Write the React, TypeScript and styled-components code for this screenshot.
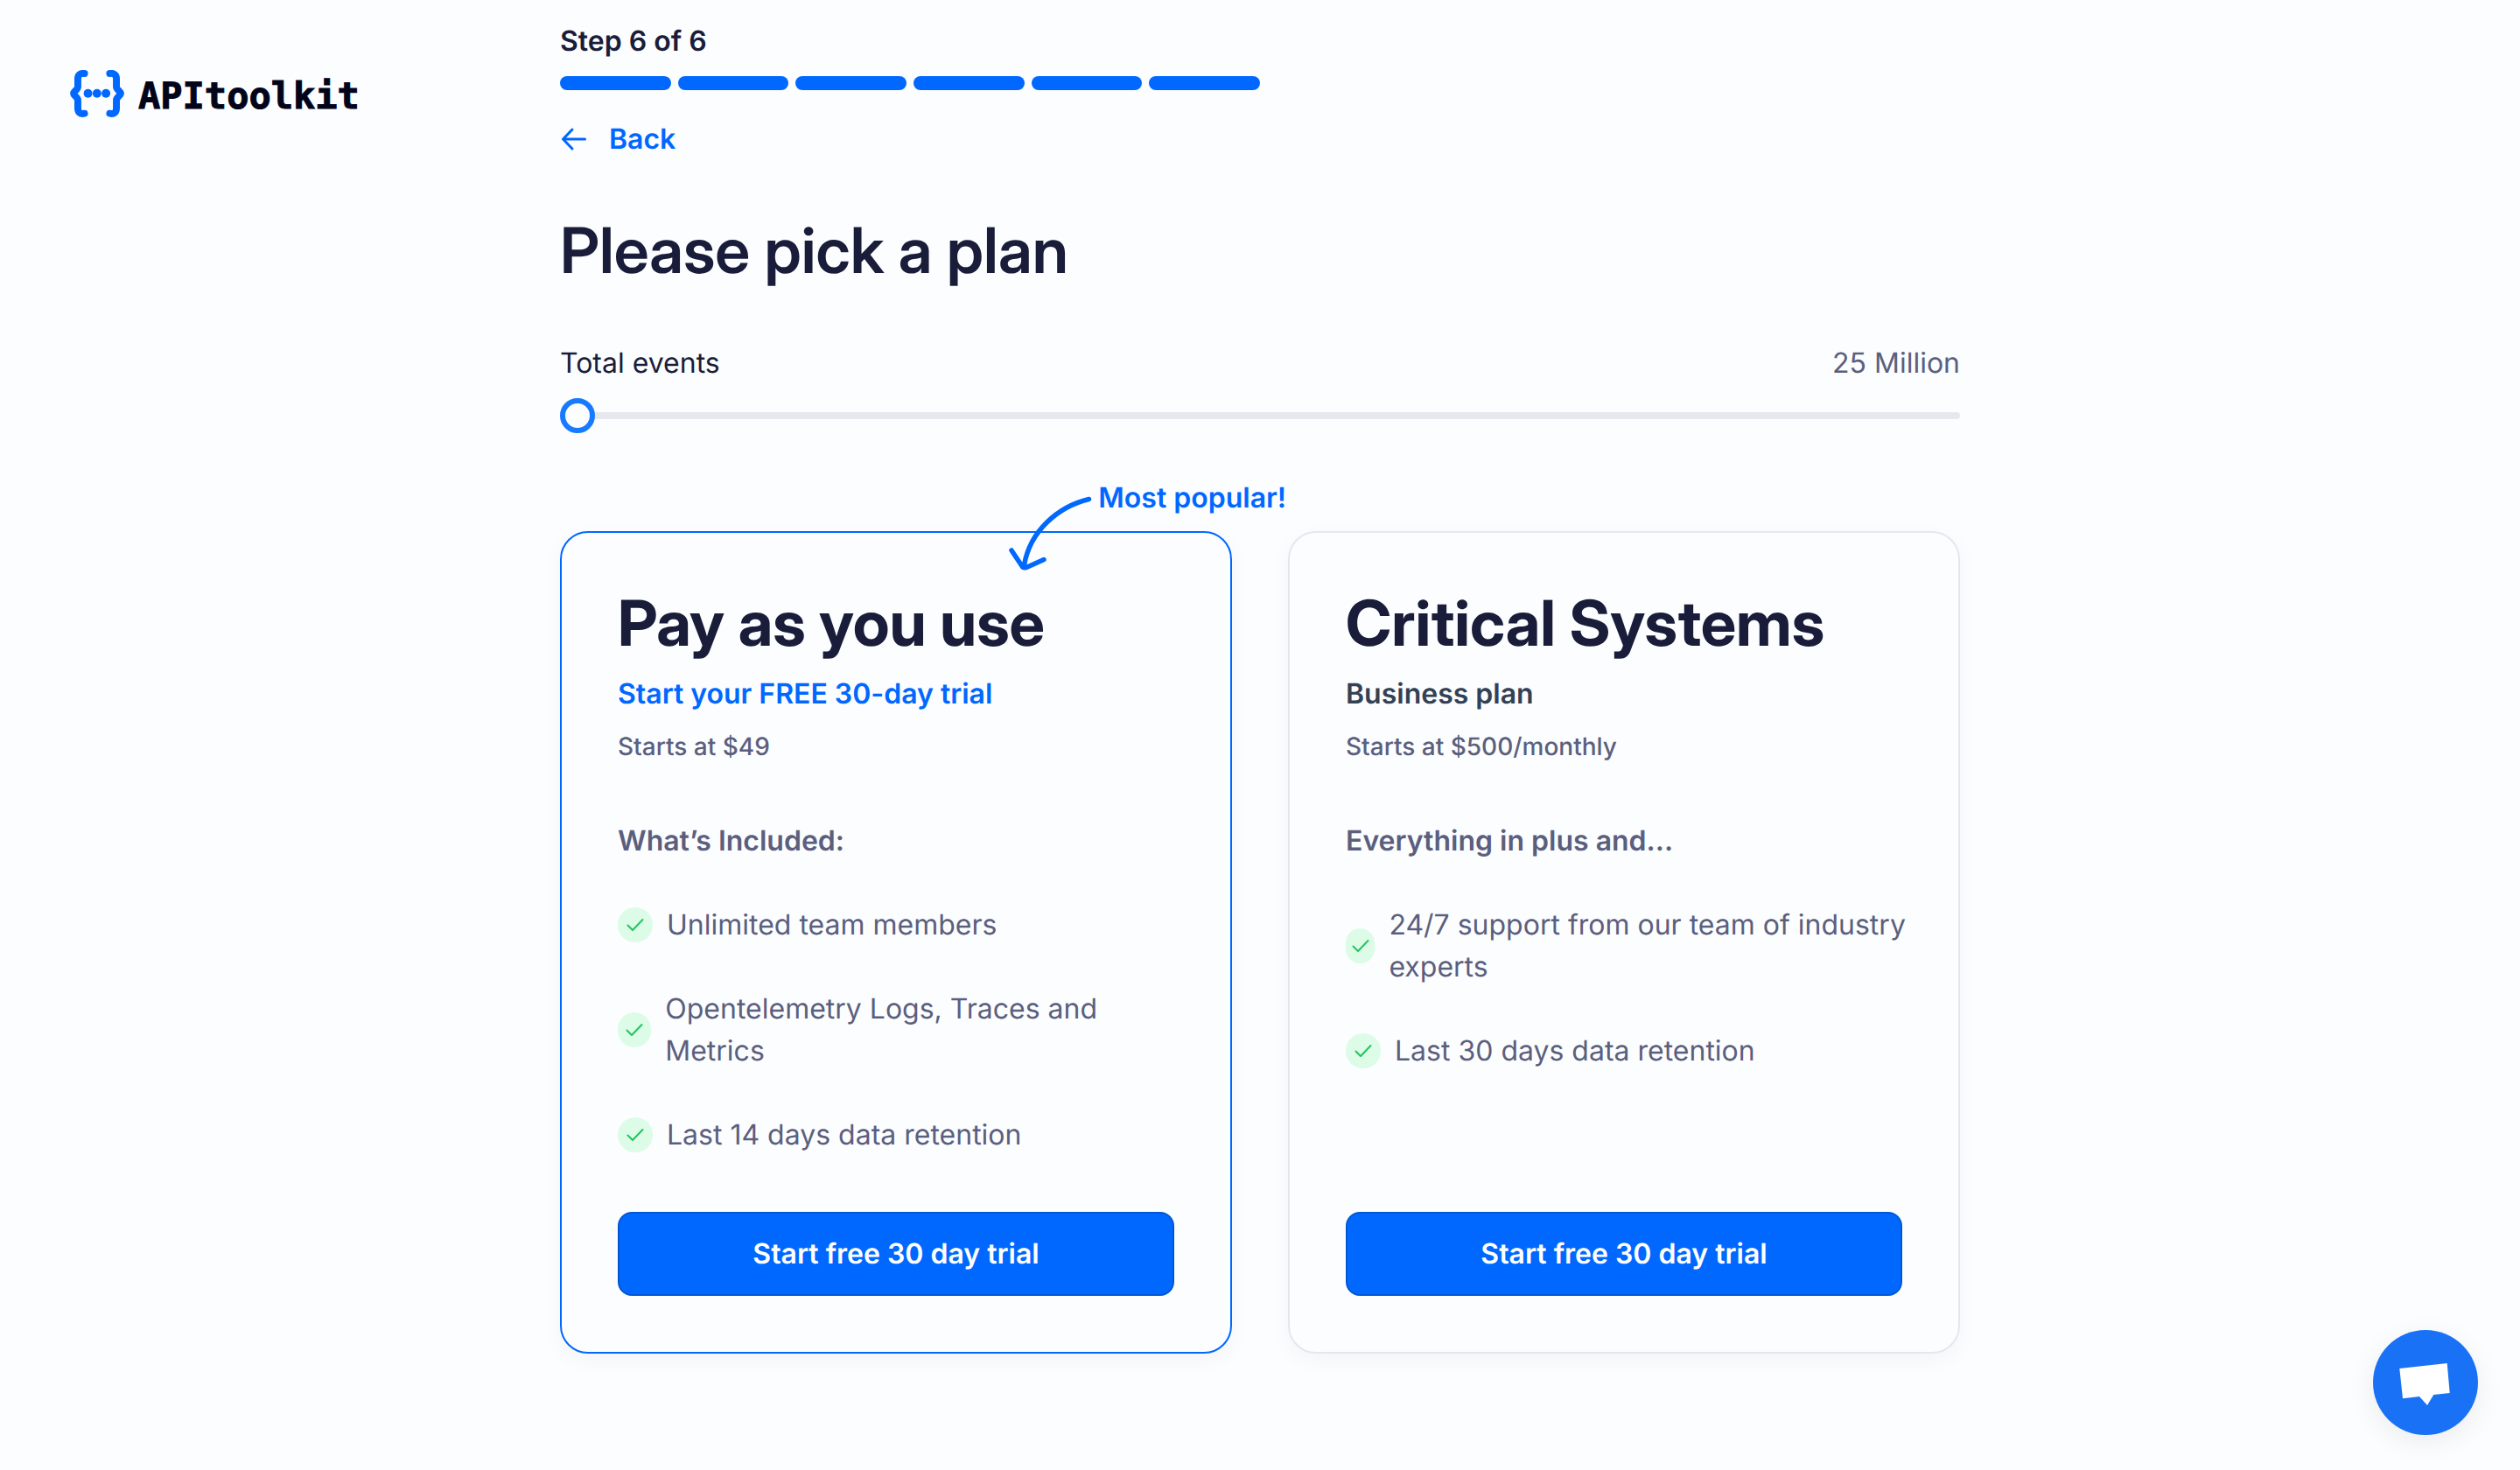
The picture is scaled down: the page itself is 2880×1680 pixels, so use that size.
import React, { useState } from "react";
import styled, { createGlobalStyle } from "styled-components";

const color = {
  page: "#fcfdff",
  ink: "#1a1d3a",
  slate: "#334155",
  muted: "#5b5f7e",
  brand: "#0068ff",
  brandDark: "#0057d6",
  line: "#e5e7eb",
  track: "#e6e8ed",
  tick: "#22c55e",
  tickBg: "#dcfce7",
};

const displayFont = `"Inter Display", Inter, "Liberation Sans", sans-serif`;

const GlobalStyle = createGlobalStyle`
  *, *::before, *::after { box-sizing: border-box; }
  body {
    margin: 0;
    background: ${color.page};
    color: ${color.ink};
    font-family: Inter, "Liberation Sans", sans-serif;
    font-size: 32px;
    line-height: 48px;
    text-rendering: geometricPrecision;
    -webkit-font-smoothing: antialiased;
  }
  h1, h2, h3, p, ul { margin: 0; padding: 0; }
  button, input { font: inherit; text-rendering: inherit; }
`;

const Page = styled.div`
  display: grid;
  grid-template-columns: minmax(0, 1fr) minmax(0, 1600px) minmax(0, 1fr);
  min-height: 100vh;
`;

const Header = styled.header`
  padding: 80px 0 0 80px;
`;

const Brand = styled.a`
  display: flex;
  align-items: flex-start;
  gap: 16px;
  color: #02041a;
  text-decoration: none;
  font-family: "DejaVu Sans Mono", monospace;
  font-weight: 700;
  font-size: 42px;
  line-height: 60px;
  -webkit-text-stroke: 1px currentColor;
`;

const Main = styled.main`
  display: flex;
  flex-direction: column;
  padding: 23px 0 128px;
`;

const StepLabel = styled.p`
  font-weight: 600;
`;

const Steps = styled.div`
  display: grid;
  grid-template-columns: repeat(6, 1fr);
  gap: 8px;
  width: 50%;
  margin-top: 16px;
`;

const StepBar = styled.span`
  height: 16px;
  border-radius: 8px;
  background: ${color.brand};
`;

const BackLink = styled.a`
  display: flex;
  align-items: center;
  align-self: flex-start;
  gap: 24px;
  margin-top: 32px;
  color: ${color.brand};
  font-weight: 600;
  text-decoration: none;
`;

const Heading = styled.h1`
  margin-top: 64px;
  font-family: ${displayFont};
  font-variation-settings: "opsz" 32;
  font-size: 72px;
  line-height: 80px;
  font-weight: 600;
`;

const SliderHeader = styled.div`
  display: flex;
  justify-content: space-between;
  margin-top: 64px;
`;

const EventCount = styled.output`
  color: ${color.muted};
`;

const Slider = styled.input`
  appearance: none;
  width: 100%;
  height: 40px;
  margin: 16px 0 0;
  background: transparent;
  cursor: pointer;

  &::-webkit-slider-runnable-track {
    height: 8px;
    border-radius: 4px;
    background: ${color.track};
  }
  &::-webkit-slider-thumb {
    appearance: none;
    width: 40px;
    height: 40px;
    margin-top: -16px;
    border: 6px solid #177bff;
    border-radius: 50%;
    background: ${color.page};
  }
`;

const Plans = styled.div`
  display: grid;
  grid-template-columns: repeat(2, minmax(0, 1fr));
  gap: 64px;
  margin-top: 112px;
`;

const Card = styled.section<{ $featured?: boolean }>`
  position: relative;
  display: flex;
  flex-direction: column;
  padding: 64px;
  border: 2px solid ${(p) => (p.$featured ? color.brand : color.line)};
  border-radius: 32px;
  box-shadow: 0 8px 24px rgba(0, 0, 0, 0.04);
`;

const Popular = styled.div`
  position: absolute;
  top: -64px;
  right: -64px;
  display: flex;
  align-items: flex-start;
  gap: 4px;
  color: ${color.brand};
  font-weight: 600;

  svg {
    margin-top: 20px;
  }
`;

const PlanName = styled.h2`
  font-family: ${displayFont};
  font-variation-settings: "opsz" 32;
  font-size: 72px;
  line-height: 80px;
  font-weight: 700;
`;

const Tagline = styled.p<{ $featured?: boolean }>`
  margin-top: 16px;
  font-weight: 600;
  color: ${(p) => (p.$featured ? color.brand : color.slate)};
`;

const Price = styled.p`
  margin-top: 16px;
  font-size: 28px;
  line-height: 40px;
  font-weight: 500;
  color: ${color.muted};
`;

const IncludedTitle = styled.h3`
  margin-top: 64px;
  font-size: 32px;
  font-weight: 600;
  color: ${color.muted};
`;

const Features = styled.ul`
  display: flex;
  flex-direction: column;
  gap: 48px;
  margin: 48px -8px 64px 0;
  list-style: none;
`;

const Feature = styled.li`
  display: flex;
  align-items: center;
  gap: 16px;
  color: ${color.muted};
`;

const Tick = styled.span`
  display: flex;
  align-items: center;
  justify-content: center;
  width: 40px;
  height: 40px;
  border-radius: 20px;
  background: ${color.tickBg};

  svg {
    flex: none;
  }
`;

const TrialButton = styled.button`
  height: 96px;
  margin-top: auto;
  border: 2px solid ${color.brandDark};
  border-radius: 16px;
  background: ${color.brand};
  color: #fff;
  font-weight: 600;
  cursor: pointer;
`;

const ChatButton = styled.button`
  position: fixed;
  right: 48px;
  bottom: 40px;
  width: 120px;
  height: 120px;
  padding: 0;
  border: 0;
  border-radius: 50%;
  background: #1972f5;
  box-shadow: 0 8px 32px rgba(0, 0, 0, 0.07);
  cursor: pointer;

  svg {
    display: block;
  }
`;

const LogoMark = () => (
  <svg width="62" height="54" viewBox="0 0 187 163" fill="none" aria-hidden="true">
    <g stroke={color.brand} strokeWidth="24" strokeLinecap="round" strokeLinejoin="round">
      <path d="M50 12C34 10 27 18 27 30V58C27 68 12 74 12 81C12 88 27 94 27 104V132C27 145 34 153 50 150" />
      <path d="M137 12C153 10 160 18 160 30V58C160 68 175 74 175 81C175 88 160 94 160 104V132C160 145 153 153 137 150" />
    </g>
    <g fill={color.brand}>
      <circle cx="62" cy="81" r="15" />
      <circle cx="93" cy="81" r="15" />
      <circle cx="124" cy="81" r="15" />
    </g>
  </svg>
);

const BackArrow = () => (
  <svg width="32" height="32" viewBox="0 0 32 32" fill="none" aria-hidden="true">
    <path
      d="M28.500 16H3.500M14 5L3.500 16L14 27"
      stroke="currentColor"
      strokeWidth="3"
      strokeLinecap="round"
      strokeLinejoin="round"
    />
  </svg>
);

const PopularArrow = () => (
  <svg width="100" height="90" viewBox="0 0 100 90" fill="none" aria-hidden="true">
    <path
      d="M93.500 5.500C58 14 26 42 19.500 81M5 64L17 82C18 84 20 84 22 83.500L42 74.500"
      stroke="currentColor"
      strokeWidth="5.500"
      strokeLinecap="round"
      strokeLinejoin="round"
    />
  </svg>
);

const TickIcon = () => (
  <svg width="20" height="16" viewBox="0 0 20 16" fill="none" aria-hidden="true">
    <path
      d="M1.500 8.500L7 14L18.500 2"
      stroke={color.tick}
      strokeWidth="2"
      strokeLinecap="round"
      strokeLinejoin="round"
    />
  </svg>
);

const ChatIcon = () => (
  <svg width="120" height="120" viewBox="0 0 120 120" aria-hidden="true">
    <path d="M30.300 44L84.700 38L87.700 72L69.300 74L62 86L53 76L34 78.300Z" fill="#fff" />
  </svg>
);

interface Plan {
  name: string;
  tagline: string;
  price: string;
  includedTitle: string;
  features: string[];
  featured?: boolean;
}

const plans: Plan[] = [
  {
    name: "Pay as you use",
    tagline: "Start your FREE 30-day trial",
    price: "Starts at $49",
    includedTitle: "What’s Included:",
    features: [
      "Unlimited team members",
      "Opentelemetry Logs, Traces and Metrics",
      "Last 14 days data retention",
    ],
    featured: true,
  },
  {
    name: "Critical Systems",
    tagline: "Business plan",
    price: "Starts at $500/monthly",
    includedTitle: "Everything in plus and...",
    features: [
      "24/7 support from our team of industry experts",
      "Last 30 days data retention",
    ],
  },
];

const PlanCard = ({ plan }: { plan: Plan }) => (
  <Card $featured={plan.featured}>
    {plan.featured && (
      <Popular>
        <PopularArrow />
        Most popular!
      </Popular>
    )}
    <PlanName>{plan.name}</PlanName>
    <Tagline $featured={plan.featured}>{plan.tagline}</Tagline>
    <Price>{plan.price}</Price>
    <IncludedTitle>{plan.includedTitle}</IncludedTitle>
    <Features>
      {plan.features.map((feature) => (
        <Feature key={feature}>
          <Tick>
            <TickIcon />
          </Tick>
          <span>{feature}</span>
        </Feature>
      ))}
    </Features>
    <TrialButton type="button">Start free 30 day trial</TrialButton>
  </Card>
);

const eventTiers = [25, 50, 75, 100, 150, 200];

export default function App() {
  const [tier, setTier] = useState(0);

  return (
    <>
      <GlobalStyle />
      <Page>
        <Header>
          <Brand href="#">
            <LogoMark />
            APItoolkit
          </Brand>
        </Header>
        <Main>
          <StepLabel>Step 6 of 6</StepLabel>
          <Steps>
            {[1, 2, 3, 4, 5, 6].map((step) => (
              <StepBar key={step} />
            ))}
          </Steps>
          <BackLink href="#">
            <BackArrow />
            Back
          </BackLink>
          <Heading>Please pick a plan</Heading>
          <SliderHeader>
            <label htmlFor="events">Total events</label>
            <EventCount htmlFor="events">{eventTiers[tier]} Million</EventCount>
          </SliderHeader>
          <Slider
            id="events"
            type="range"
            min={0}
            max={eventTiers.length - 1}
            value={tier}
            onChange={(e) => setTier(Number(e.target.value))}
          />
          <Plans>
            {plans.map((plan) => (
              <PlanCard key={plan.name} plan={plan} />
            ))}
          </Plans>
        </Main>
      </Page>
      <ChatButton type="button" aria-label="Open chat">
        <ChatIcon />
      </ChatButton>
    </>
  );
}
